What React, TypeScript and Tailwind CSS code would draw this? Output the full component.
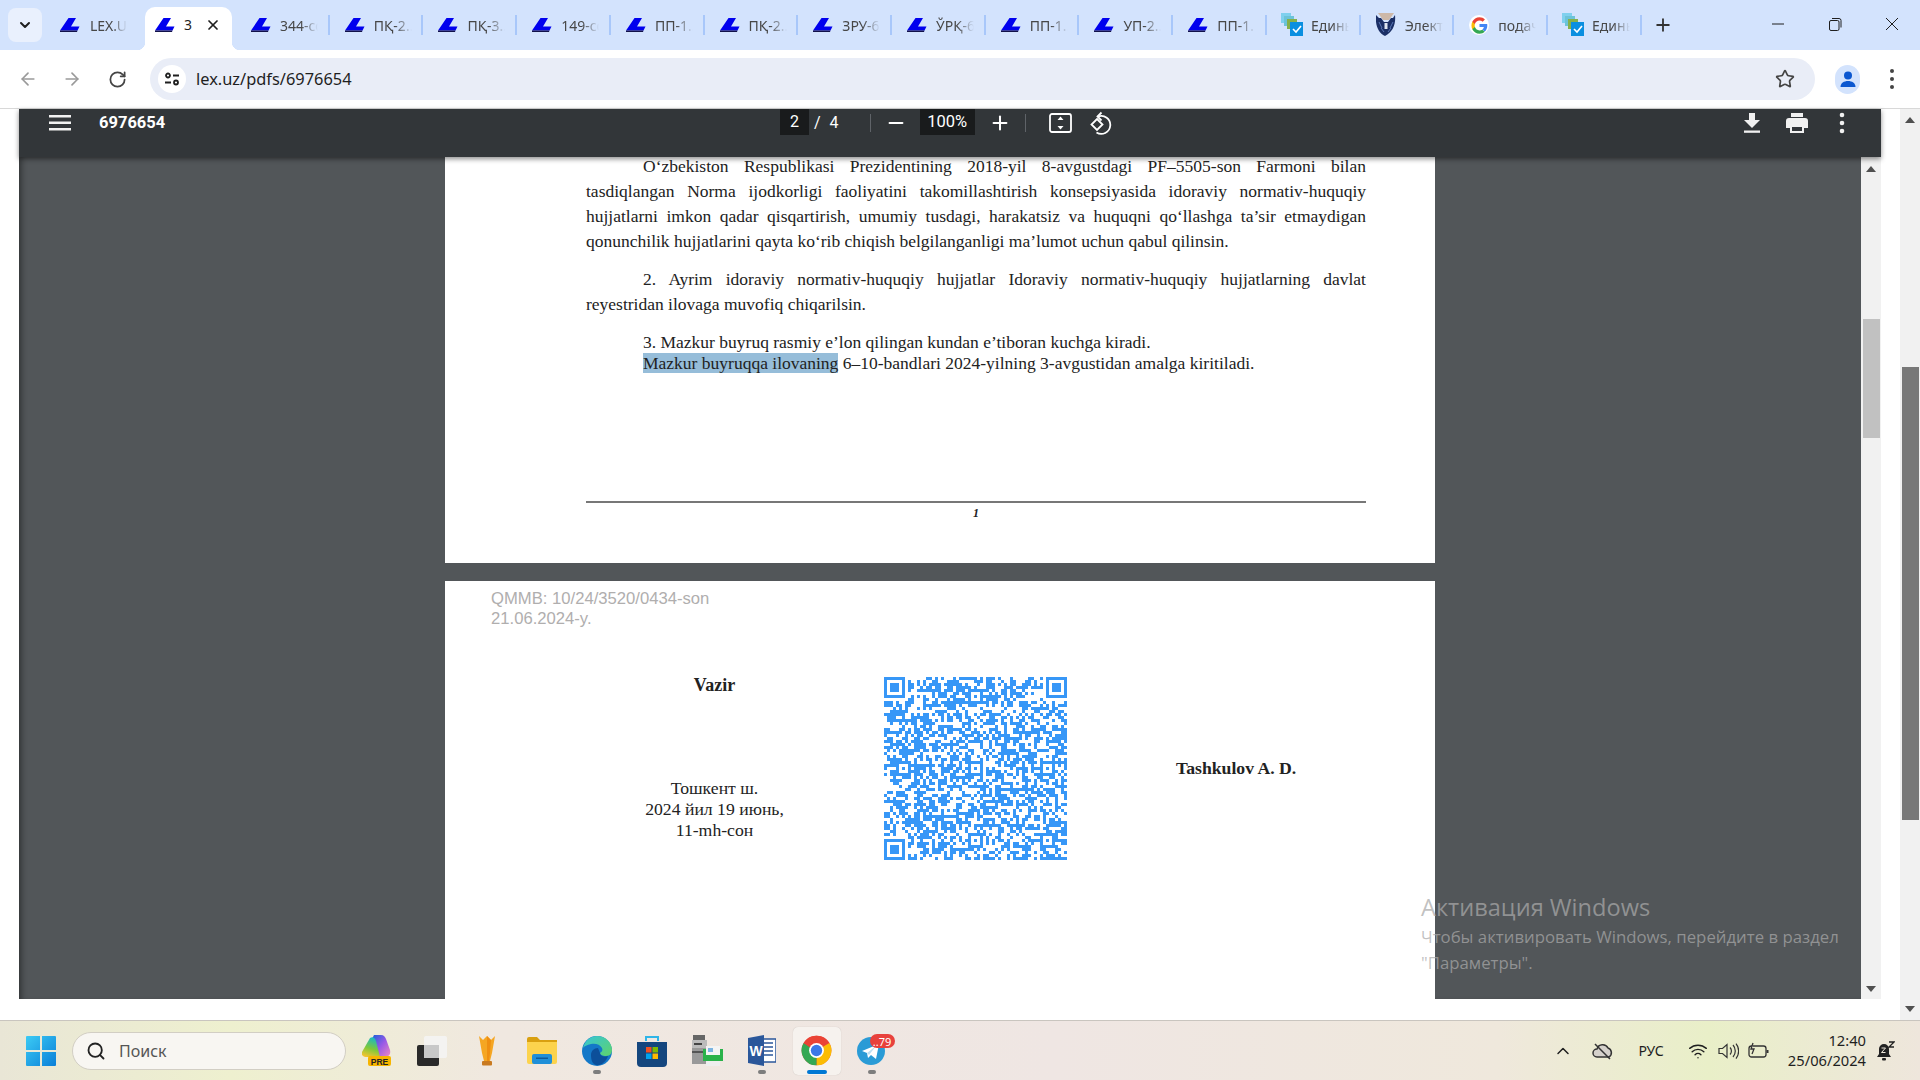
import { useMemo } from "react";
import { ArrowLeft, ArrowRight, ChevronDown, ChevronUp, Minus, Plus, RotateCw, Search, Star, Wifi, X } from "lucide-react";

function Lex() {
  return (
    <svg width="20" height="14" viewBox="0 0 20 14" className="shrink-0">
      <path d="M8.500 0H16l-5 8.500h8.500l-2 4H0z" fill="#0000ee" />
      <path d="M0 12.500h17.500L17 14H0z" fill="#12124a" />
    </svg>
  );
}
function Edin() {
  return (
    <svg width="22" height="24" viewBox="0 0 22 24" className="shrink-0">
      <rect x="0" y="0" width="10" height="10" fill="#7fd0ee" />
      <rect x="3" y="3" width="10" height="10" fill="#6cc3d8" />
      <rect x="6" y="6" width="10" height="10" fill="#86b04a" />
      <rect x="9" y="9" width="13" height="14" fill="#0a8fe0" />
      <path d="M12 16l3 3 5-6" stroke="#fff" strokeWidth="1.600" fill="none" />
    </svg>
  );
}
function Shield() {
  return (
    <svg width="20" height="24" viewBox="0 0 20 24" className="shrink-0">
      <path d="M2 0h16l-5 7H7z" fill="#cdb8a8" />
      <path d="M0 2l3 3 2 0 3 4h4l3-4 2 0 2-3c1 9-2 17-10 21C2 20-1 11 0 2z" fill="#1b2f66" />
      <path d="M3 9l3 6M17 9l-3 6M5 15l3 4M15 15l-3 4" stroke="#5a78b8" strokeWidth="1" />
      <path d="M8.500 10h3v6h-3z" fill="#dfe6f2" />
    </svg>
  );
}
function GoogleG({ size = 20 }: { size?: number }) {
  return (
    <span className="flex shrink-0 items-center justify-center rounded-full bg-white" style={{ width: size, height: size }}>
      <svg width={size - 3} height={size - 3} viewBox="0 0 48 48">
        <path fill="#4285F4" d="M46 24.500c0-1.600-.1-3.100-.4-4.500H24v8.500h12.400c-.5 2.900-2.100 5.300-4.600 7l7.100 5.500c4.200-3.800 7.100-9.500 7.100-16.500z" />
        <path fill="#34A853" d="M24 47c6.200 0 11.400-2 15-5.600l-7.200-5.500c-2 1.300-4.600 2.100-7.800 2.100-6 0-11.100-4-12.900-9.500H3.700v5.800C7.400 41.500 15.100 47 24 47z" />
        <path fill="#FBBC05" d="M11.100 28.500c-.5-1.400-.7-2.900-.7-4.500s.3-3.100.7-4.500v-5.800H3.700C2.200 16.700 1.300 20.200 1.300 24s.9 7.300 2.400 10.300z" />
        <path fill="#EA4335" d="M24 10c3.400 0 6.500 1.200 8.900 3.500l6.400-6.400C35.400 3.500 30.200 1 24 1 15.100 1 7.400 6.500 3.700 13.700l7.400 5.800C12.900 14 18 10 24 10z" />
      </svg>
    </span>
  );
}

const tabs: [string, string][] = [
  ["lex", "344-сон"], ["lex", "ПҚ-2..."], ["lex", "ПҚ-3..."], ["lex", "149-сон"], ["lex", "ПП-1..."],
  ["lex", "ПҚ-2..."], ["lex", "ЗРУ-6"], ["lex", "ЎРҚ-6"], ["lex", "ПП-1..."], ["lex", "УП-2..."],
  ["lex", "ПП-1..."], ["edin", "Единый"], ["shield", "Электрон"], ["g", "подача"], ["edin", "Единый"],
];

function Fav({ t }: { t: string }) {
  if (t === "lex") return <span className="flex w-5 shrink-0 justify-center"><Lex /></span>;
  if (t === "edin") return <span className="flex w-5 shrink-0 justify-center"><Edin /></span>;
  if (t === "shield") return <span className="flex w-5 shrink-0 justify-center"><Shield /></span>;
  return <span className="flex w-5 shrink-0 justify-center"><GoogleG /></span>;
}

function TabStrip() {
  return (
    <div className="flex h-[50px] shrink-0 items-start bg-[#d3e3fd] pl-2 font-['Noto_Sans',sans-serif] text-[14px] text-[#474747]">
      <div className="mt-2 flex h-[34px] w-[34px] items-center justify-center rounded-lg bg-[#e9f0fd]">
        <ChevronDown size={16} strokeWidth={3} className="text-[#1f1f1f]" />
      </div>
      <div className="mt-[15px] flex h-5 w-[103px] items-center pl-[18px]">
        <Fav t="lex" />
        <span className="ml-[10px] w-[37px] overflow-hidden whitespace-nowrap [mask-image:linear-gradient(90deg,#000_60%,transparent)]">LEX.UZ</span>
      </div>
      <div className="relative mt-[7px] flex h-[43px] w-[87px] items-center rounded-t-[10px] bg-white pb-[8px] pl-[10px]">
        <span className="absolute -left-2 bottom-0 h-2 w-2 bg-[radial-gradient(circle_at_0_0,transparent_8px,#fff_8.5px)]" />
        <span className="absolute -right-2 bottom-0 h-2 w-2 bg-[radial-gradient(circle_at_100%_0,transparent_8px,#fff_8.5px)]" />
        <Fav t="lex" />
        <span className="ml-[9px] w-[19px] overflow-hidden whitespace-nowrap text-[#1f1f1f]">3</span>
        <X size={16} strokeWidth={2.600} className="ml-[2px] text-[#1f1f1f]" />
      </div>
      <div className="ml-1 flex">
        {tabs.map(([t, s], i) => (
          <div key={i} className="mt-[15px] flex h-5 w-[93.73px] items-center border-r-2 border-[#a8c7fa] pl-[15px]">
            <Fav t={t} />
            <span className="ml-[9px] w-[38px] overflow-hidden whitespace-nowrap [mask-image:linear-gradient(90deg,#000_55%,transparent)]">{s}</span>
          </div>
        ))}
      </div>
      <Plus size={20} strokeWidth={2.200} className="ml-[11px] mt-[15px] text-[#333]" />
      <div className="ml-auto flex h-[48px] items-center text-[#1f1f1f]">
        <div className="flex w-[57px] justify-center">
          <svg width="16" height="16" viewBox="0 0 16 16"><path d="M2 8h12" stroke="#1f1f1f" strokeWidth="1" /></svg>
        </div>
        <div className="flex w-[57px] justify-center">
          <svg width="16" height="16" viewBox="0 0 16 16" fill="none" stroke="#1f1f1f" strokeWidth="1"><rect x="2.500" y="4.500" width="9.500" height="10" rx="1.500" /><path d="M5 2.500h7a2 2 0 0 1 2 2v7" /></svg>
        </div>
        <div className="flex w-[57px] justify-center">
          <svg width="16" height="16" viewBox="0 0 16 16"><path d="M2 2l12 12M14 2 2 14" stroke="#1f1f1f" strokeWidth="1" /></svg>
        </div>
      </div>
    </div>
  );
}

function Toolbar() {
  return (
    <div className="flex h-[59px] shrink-0 items-center rounded-t-[10px] border-b border-[#d8d8d8] bg-white font-['Noto_Sans',sans-serif]">
      <div className="flex w-[150px] shrink-0 items-center">
        <ArrowLeft size={20} strokeWidth={2} className="ml-[18px] text-[#9a9a9a]" />
        <ArrowRight size={20} strokeWidth={2} className="ml-[24px] text-[#9a9a9a]" />
        <RotateCw size={19} strokeWidth={2.200} className="ml-[26px] text-[#444]" />
      </div>
      <div className="flex h-[42px] w-[1665px] items-center rounded-full bg-[#e9edf7] pl-2">
        <span className="flex h-7 w-7 items-center justify-center rounded-full bg-white">
          <svg width="16" height="16" viewBox="0 0 16 16" fill="none" stroke="#1f1f1f" strokeWidth="1.800">
            <circle cx="4" cy="4.500" r="2" /><path d="M9 4.500h6M1 11.500h6" /><circle cx="12" cy="11.500" r="2" />
          </svg>
        </span>
        <span className="ml-[10px] text-[16.4px] text-[#1f1f1f]">lex.uz/pdfs/6976654</span>
        <Star size={20} strokeWidth={2} className="ml-auto mr-[20px] text-[#444]" />
      </div>
      <div className="ml-[20px] flex h-[29px] w-[25px] items-center justify-center rounded-full bg-[#d3e3fd]">
        <svg width="18" height="18" viewBox="0 0 18 18" fill="#0b57d0"><circle cx="9" cy="5.500" r="4" /><path d="M1.500 17c0-4 3.500-6 7.500-6s7.500 2 7.500 6z" /></svg>
      </div>
      <svg width="6" height="22" viewBox="0 0 6 22" fill="#444" className="ml-[29px]"><circle cx="3" cy="3" r="2" /><circle cx="3" cy="11" r="2" /><circle cx="3" cy="19" r="2" /></svg>
    </div>
  );
}

function PdfBar() {
  return (
    <div className="relative z-10 flex h-[48px] shrink-0 items-start bg-[#323639] font-['Roboto',sans-serif] text-white shadow-[0_2px_5px_rgba(0,0,0,.45)]">
      <div className="flex h-[28px] w-full items-center">
        <svg width="22" height="16" viewBox="0 0 22 16" fill="#f1f1f1" className="ml-[30px]"><rect width="22" height="2.500" /><rect y="6.500" width="22" height="2.500" /><rect y="13" width="22" height="2.500" /></svg>
        <span className="ml-[28px] w-[681px] text-[16.5px] font-bold">6976654</span>
        <span className="flex h-[26px] w-[29px] items-center justify-center self-start bg-[#191b1c] text-[16px]">2</span>
        <span className="ml-[5px] text-[16px]">/</span>
        <span className="ml-[9px] text-[16px]">4</span>
        <span className="ml-[31px] h-[18px] w-px bg-[#5f6368]" />
        <Minus size={22} strokeWidth={2.200} className="ml-[14px]" />
        <span className="ml-[13px] flex h-[26px] w-[55px] items-center justify-center self-start bg-[#191b1c] text-[16.5px]">100%</span>
        <Plus size={22} strokeWidth={2.200} className="ml-[14px]" />
        <span className="ml-[14px] h-[18px] w-px bg-[#5f6368]" />
        <svg width="23" height="20" viewBox="0 0 23 20" fill="none" className="ml-[23px]"><rect x="1" y="1" width="21" height="18" rx="2" stroke="#fff" strokeWidth="1.800" /><path d="M11.500 3.500l3 3.500h-6zM11.500 16.500l3-3.500h-6z" fill="#fff" /></svg>
        <svg width="24" height="24" viewBox="0 0 24 24" fill="none" stroke="#fff" strokeWidth="1.800" className="ml-[17px]">
          <path d="M9 5.500a9 9 0 1 1-1.500 16" /><path d="M12.500 1.500 8.500 5.500l4 4" /><path d="M8 8l5.500 5.500L8 19 2.500 13.500z" />
        </svg>
        <svg width="18" height="22" viewBox="0 0 18 22" fill="#f1f1f1" className="ml-[630px]"><path d="M6 1h6v7h5L9 16 1 8h5z" /><rect x="1" y="18.500" width="16" height="2.300" /></svg>
        <svg width="22" height="22" viewBox="0 0 22 22" fill="#f1f1f1" className="ml-[25px]"><path d="M5 1h12v4H5z" /><path clipRule="evenodd" fillRule="evenodd" d="M3 6h16a3 3 0 0 1 3 3v7h-4v5H4v-5H0V9a3 3 0 0 1 3-3zm3 9v4h10v-4z" /></svg>
        <svg width="6" height="22" viewBox="0 0 6 22" fill="#f1f1f1" className="ml-[31px]"><circle cx="3" cy="3" r="2.300" /><circle cx="3" cy="11" r="2.300" /><circle cx="3" cy="19" r="2.300" /></svg>
      </div>
    </div>
  );
}

function QR() {
  const d = useMemo(() => {
    const N = 61;
    let s = 20240619;
    const rnd = () => { s = (s * 1664525 + 1013904223) >>> 0; return (s >>> 16) / 65536; };
    const g: number[][] = [];
    for (let y = 0; y < N; y++) { g.push([]); for (let x = 0; x < N; x++) g[y].push(rnd() < 0.54 ? 1 : 0); }
    const finder = (ox: number, oy: number) => {
      for (let y = -1; y < 8; y++) for (let x = -1; x < 8; x++) {
        const X = ox + x, Y = oy + y;
        if (X < 0 || Y < 0 || X >= N || Y >= N) continue;
        const on = x >= 0 && x < 7 && y >= 0 && y < 7 && (x === 0 || x === 6 || y === 0 || y === 6 || (x >= 2 && x <= 4 && y >= 2 && y <= 4));
        g[Y][X] = on ? 1 : 0;
      }
    };
    finder(0, 0); finder(54, 0); finder(0, 54);
    const al = [6, 30, 54];
    for (const ay of al) for (const ax of al) {
      if ((ax === 6 && ay === 6) || (ax === 54 && ay === 6) || (ax === 6 && ay === 54)) continue;
      for (let y = -2; y <= 2; y++) for (let x = -2; x <= 2; x++)
        g[ay + y][ax + x] = Math.max(Math.abs(x), Math.abs(y)) === 1 ? 0 : 1;
    }
    let p = "";
    for (let y = 0; y < N; y++) for (let x = 0; x < N; x++) if (g[y][x]) p += `M${x} ${y}h1v1h-1z`;
    return p;
  }, []);
  return (
    <svg width="183" height="183" viewBox="0 0 61 61" shapeRendering="crispEdges" className="shrink-0">
      <path d={d} fill="#3797f7" />
    </svg>
  );
}

function J({ children, indent }: { children: string; indent?: boolean }) {
  return <div className={`[text-align:justify] [text-align-last:justify] ${indent ? "indent-[57px]" : ""}`}>{children}</div>;
}

function Pages() {
  return (
    <div className="flex min-w-0 flex-1 flex-col items-center overflow-hidden bg-[#525659] shadow-[inset_6px_0_6px_-4px_rgba(0,0,0,.45)]">
      <div className="flex h-[406px] w-[990px] shrink-0 flex-col bg-white pl-[141px] pr-[69px] font-['Liberation_Serif',serif] text-[17.5px] text-[#222]">
        <div className="-mt-[3px] leading-[25px]">
          <J indent>O‘zbekiston Respublikasi Prezidentining 2018-yil 8-avgustdagi PF–5505-son Farmoni bilan</J>
          <J>tasdiqlangan Norma ijodkorligi faoliyatini takomillashtirish konsepsiyasida idoraviy normativ-huquqiy</J>
          <J>hujjatlarni imkon qadar qisqartirish, umumiy tusdagi, harakatsiz va huquqni qo‘llashga ta’sir etmaydigan</J>
          <div>qonunchilik hujjatlarini qayta ko‘rib chiqish belgilanganligi ma’lumot uchun qabul qilinsin.</div>
        </div>
        <div className="mt-[13px] leading-[25px]">
          <J indent>2. Ayrim idoraviy normativ-huquqiy hujjatlar Idoraviy normativ-huquqiy hujjatlarning davlat</J>
          <div>reyestridan ilovaga muvofiq chiqarilsin.</div>
        </div>
        <div className="mt-[15px] pl-[57px] leading-[20.5px]">
          <div>3. Mazkur buyruq rasmiy e’lon qilingan kundan e’tiboran kuchga kiradi.</div>
          <div><span className="bg-[#96bdd9]">Mazkur buyruqqa ilovaning</span> 6–10-bandlari 2024-yilning 3-avgustidan amalga kiritiladi.</div>
        </div>
        <div className="mt-[128px] h-[2px] bg-[#777]" />
        <div className="mt-[3px] text-center text-[12px] font-bold italic leading-[14px]">1</div>
      </div>
      <div className="mt-[18px] flex h-[420px] w-[990px] shrink-0 flex-col bg-white font-['Liberation_Serif',serif] text-[#222]">
        <div className="pl-[46px] pt-[8px] font-['Liberation_Sans',sans-serif] text-[16.65px] leading-[20px] text-[#b0aeae]">
          <div>QMMB: 10/24/3520/0434-son</div>
          <div>21.06.2024-y.</div>
        </div>
        <div className="mt-[48px] flex">
          <div className="flex h-[183px] w-[439px] shrink-0 flex-col items-center pl-[100px] text-[17.7px]">
            <div className="mt-[-5.5px] text-[18px] font-bold">Vazir</div>
            <div className="mt-[79.5px] text-center leading-[21px]">
              <div>Тошкент ш.</div>
              <div>2024 йил 19 июнь,</div>
              <div>11-mh-сон</div>
            </div>
          </div>
          <QR />
          <div className="ml-[109px] mt-[77.5px] text-[17.7px] font-bold">Tashkulov A. D.</div>
        </div>
      </div>
    </div>
  );
}

function Arrow({ up, className = "" }: { up?: boolean; className?: string }) {
  return (
    <svg width="10" height="6" viewBox="0 0 10 6" fill="#505050" className={className}>
      <path d={up ? "M5 0l5 6H0z" : "M0 0h10L5 6z"} />
    </svg>
  );
}

function InnerScroll() {
  return (
    <div className="flex w-5 shrink-0 flex-col items-center bg-[#f1f1f1]">
      <Arrow up className="mt-[9px]" />
      <div className="mt-[147px] h-[119px] w-[17px] bg-[#c1c1c1]" />
      <Arrow className="mt-auto mb-[7px]" />
    </div>
  );
}

function OuterScroll() {
  return (
    <div className="flex w-5 shrink-0 flex-col items-center bg-[#f1f1f1]">
      <Arrow up className="mt-[8px]" />
      <div className="mt-[244px] h-[453px] w-[17px] bg-[#787878]" />
      <Arrow className="mt-auto mb-[8px]" />
    </div>
  );
}

function Main() {
  return (
    <div className="relative flex min-h-0 flex-1 bg-white">
      <div className="ml-[19px] flex h-[890px] w-[1862px] shrink-0 flex-col">
        <PdfBar />
        <div className="flex min-h-0 flex-1">
          <Pages />
          <InnerScroll />
        </div>
      </div>
      <div className="ml-[19px] flex">
        <OuterScroll />
      </div>
      <div className="pointer-events-none absolute left-[1421px] top-[780px] z-20 font-['Open_Sans',sans-serif] text-[rgba(170,170,170,.72)]">
        <div className="text-[23.6px] leading-[36px]">Активация Windows</div>
        <div className="-mt-px text-[16.8px] leading-[26px]">Чтобы активировать Windows, перейдите в раздел</div>
        <div className="text-[16.8px] leading-[26px]">"Параметры".</div>
      </div>
    </div>
  );
}

function Copilot() {
  return (
    <svg width="30" height="31" viewBox="0 0 30 31">
      <defs>
        <linearGradient id="cp" x1="0" y1="0" x2="1" y2="1"><stop offset="0" stopColor="#1a5fd8" /><stop offset=".5" stopColor="#9a5ae6" /><stop offset="1" stopColor="#f08ac0" /></linearGradient>
        <linearGradient id="cp2" x1="0.600" y1="0" x2="0.300" y2="1"><stop offset="0" stopColor="#17b8c8" /><stop offset=".55" stopColor="#7cc83a" /><stop offset="1" stopColor="#f4c430" /></linearGradient>
      </defs>
      <path d="M12 0h7c3 0 4 2 5 4l4 11c1 4-1 7-5 7h-6l-3-11c-1-4-2-7-4-7z" fill="url(#cp)" />
      <path d="M8 3c3-2 5 0 6 3l4 16H5c-4 0-6-2-5-5z" fill="url(#cp2)" />
      <rect x="6" y="21" width="23" height="10" rx="2" fill="#f7b500" />
      <text x="17.500" y="29.500" textAnchor="middle" fontSize="8.500" fontWeight="700" fontFamily="Liberation Sans" fill="#222">PRE</text>
    </svg>
  );
}
function TaskView() {
  return (
    <svg width="30" height="30" viewBox="0 0 30 30">
      <rect x="0" y="9" width="22" height="21" rx="2" fill="#2a2a2a" />
      <rect x="7" y="0" width="23" height="22" rx="2" fill="#f4f4f4" opacity=".85" />
      <rect x="7" y="9" width="15" height="13" fill="#c8c8c8" />
    </svg>
  );
}
function Trophy() {
  return (
    <svg width="16" height="30" viewBox="0 0 16 30">
      <path d="M0 0l4 4 4-4 4 4 4-4-3 17-2 8H5l-2-8z" fill="#f5a623" />
      <path d="M8 0l4 4-1 13-1 8H8z" fill="#ef8f12" />
      <rect x="3" y="25" width="10" height="4.500" rx="1" fill="#c97a20" />
    </svg>
  );
}
function Folder() {
  return (
    <svg width="30" height="27" viewBox="0 0 30 27">
      <path d="M0 2a2 2 0 0 1 2-2h8l3 3h17v4H0z" fill="#d9a010" />
      <path d="M0 5h30v20a2 2 0 0 1-2 2H2a2 2 0 0 1-2-2z" fill="#fcd34d" />
      <rect x="5" y="17" width="20" height="10" rx="2" fill="#1f8fd8" />
      <rect x="9" y="20.500" width="12" height="1.500" fill="#0c5a9a" />
    </svg>
  );
}
function Edge() {
  return (
    <svg width="30" height="32" viewBox="0 0 30 32">
      <defs>
        <linearGradient id="eg" x1="0" y1="0" x2="1" y2="1"><stop offset="0" stopColor="#36c5d8" /><stop offset="1" stopColor="#5fd36a" /></linearGradient>
      </defs>
      <circle cx="15" cy="16" r="15" fill="#1478c8" />
      <path d="M1 13C3 5 9 1 15 1c8 0 15 6 15 14 0 3-2 6-6 6-3 0-6-1-6-3 2-1 3-3 2-5-2-4-7-5-11-4-4 1-7 2-8 4z" fill="url(#eg)" />
      <path d="M9 20c0-4 3-7 7-7l2 5c0 3 4 4 8 3-2 6-7 10-12 9-4-1-5-6-5-10z" fill="#0c4f9a" />
    </svg>
  );
}
function Store() {
  return (
    <svg width="30" height="32" viewBox="0 0 30 32">
      <path d="M9 6V2h12v4" fill="none" stroke="#2fb5e8" strokeWidth="2" />
      <path d="M0 7h30v21a4 4 0 0 1-4 4H4a4 4 0 0 1-4-4z" fill="#14467e" />
      <rect x="9" y="12" width="5.500" height="5.500" fill="#f25022" />
      <rect x="15.500" y="12" width="5.500" height="5.500" fill="#7fba00" />
      <rect x="9" y="18.500" width="5.500" height="5.500" fill="#00a4ef" />
      <rect x="15.500" y="18.500" width="5.500" height="5.500" fill="#ffb900" />
    </svg>
  );
}
function Printer() {
  return (
    <svg width="32" height="32" viewBox="0 0 32 32">
      <rect x="2" y="0" width="12" height="5" fill="#666" />
      <rect x="1" y="5" width="15" height="8" fill="#bbb" />
      <rect x="3" y="8" width="8" height="2" fill="#444" />
      <rect x="1" y="13" width="14" height="16" fill="#999" />
      <rect x="1" y="16" width="14" height="2" fill="#555" />
      <rect x="12" y="14" width="20" height="12" fill="#2ab24a" />
      <rect x="15" y="11" width="14" height="9" fill="#f4f4f4" />
      <rect x="17" y="13" width="5" height="4" fill="#7cb4e0" />
      <rect x="15" y="26" width="14" height="5" fill="#eee" />
    </svg>
  );
}
function Word() {
  return (
    <svg width="28" height="31" viewBox="0 0 28 31">
      <rect x="11" y="4" width="17" height="23" fill="#fff" stroke="#2b579a" strokeWidth="1.500" />
      <path d="M14 8h11M14 12h11M14 16h11M14 20h11" stroke="#2b579a" strokeWidth="1.500" />
      <path d="M0 3l16-3v31L0 28z" fill="#2b579a" />
      <text x="8" y="21" textAnchor="middle" fontSize="14" fontWeight="700" fontFamily="Liberation Sans" fill="#fff">W</text>
    </svg>
  );
}
function Chrome() {
  return (
    <svg width="31" height="31" viewBox="0 0 48 48">
      <circle cx="24" cy="24" r="23" fill="#ea4335" />
      <path d="M24 24 44 12.500A23 23 0 0 1 24 47z" fill="#fbbc04" />
      <path d="M24 24 24 47A23 23 0 0 1 4 12.500z" fill="#34a853" />
      <path d="M24 1a23 23 0 0 1 20 11.500H24A11.500 11.500 0 0 0 13.500 19L4 12.500A23 23 0 0 1 24 1z" fill="#ea4335" />
      <circle cx="24" cy="24" r="11.500" fill="#fff" />
      <circle cx="24" cy="24" r="8.800" fill="#3b78e7" />
    </svg>
  );
}
function Telegram() {
  return (
    <span className="relative block h-[31px] w-[30px]">
      <svg width="28" height="28" viewBox="0 0 28 28" className="mt-[2px]">
        <circle cx="14" cy="14" r="14" fill="#2a9bd6" />
        <path d="M5 14l17-7-3 15-5-4-3 3-1-5z" fill="#fff" />
        <path d="M10 16l9-7-7 9z" fill="#bcdff2" />
      </svg>
      <span className="absolute -right-[8px] -top-[1px] flex h-[14px] w-[25px] items-center justify-center rounded-[7px] bg-[#e8413c] font-['Noto_Sans',sans-serif] text-[11px] leading-none text-white">..79</span>
    </span>
  );
}
function StartLogo() {
  return (
    <svg width="30" height="30" viewBox="0 0 30 30">
      <defs>
        <linearGradient id="win" x1="0" y1="0" x2="1" y2="1"><stop offset="0" stopColor="#3ccbf4" /><stop offset="1" stopColor="#0a7fd8" /></linearGradient>
      </defs>
      <path d="M1 0h13v14H0V1a1 1 0 0 1 1-1zM16 0h13a1 1 0 0 1 1 1v13H16zM0 16h14v14H1a1 1 0 0 1-1-1zM16 16h14v13a1 1 0 0 1-1 1H16z" fill="url(#win)" />
    </svg>
  );
}

function Cell({ children, active, dot }: { children: React.ReactNode; active?: boolean; dot?: boolean }) {
  return (
    <div className={`relative flex h-[48px] w-[48px] items-center justify-center rounded-[5px] mx-[3.5px] ${active ? "bg-[#f6f2ee] shadow-[0_0_1px_rgba(0,0,0,.2)]" : ""}`}>
      {children}
      {dot && <span className="absolute bottom-[1px] left-1/2 h-1 w-2 -translate-x-1/2 rounded-full bg-[#7d7d7d]" />}
      {active && <span className="absolute bottom-[1px] left-1/2 h-1 w-5 -translate-x-1/2 rounded-full bg-[#0078d4]" />}
    </div>
  );
}

function Taskbar() {
  return (
    <div className="flex h-[60px] shrink-0 items-center border-t border-[#c9c5bf] bg-[linear-gradient(90deg,#e9e6d6_0%,#eef0cf_12%,#f0e8e0_26%,#efe6e3_55%,#efe8dc_78%,#e9efc8_89%,#eee6dc_100%)] font-['Noto_Sans',sans-serif] text-[#1f1f1f]">
      <div className="ml-[26px] flex w-[30px] shrink-0"><StartLogo /></div>
      <div className="ml-[16px] flex h-[38px] w-[274px] shrink-0 items-center rounded-full border border-[#d2cec4] bg-[#f8f6f2] pl-[13px]">
        <Search size={20} strokeWidth={2.200} className="text-[#222]" />
        <span className="ml-[13px] text-[16px] text-[#555]">Поиск</span>
      </div>
      <div className="ml-[3px] flex items-center">
        <Cell><Copilot /></Cell>
        <Cell><TaskView /></Cell>
        <Cell><Trophy /></Cell>
        <Cell><Folder /></Cell>
        <Cell dot><Edge /></Cell>
        <Cell><Store /></Cell>
        <Cell><Printer /></Cell>
        <Cell dot><Word /></Cell>
        <Cell active><Chrome /></Cell>
        <Cell dot><Telegram /></Cell>
      </div>
      <div className="ml-auto flex items-center text-[14px]">
        <div className="flex w-10 justify-center"><ChevronUp size={20} strokeWidth={1.800} /></div>
        <div className="flex w-10 justify-center">
          <svg width="22" height="18" viewBox="0 0 22 18" fill="#d5d1cb" stroke="#333" strokeWidth="1.500"><path d="M5 15a4 4 0 0 1 0-8 6 6 0 0 1 11-1 5 5 0 0 1 1 9z" /><path d="M3 2l15 15" /></svg>
        </div>
        <div className="flex w-[56px] justify-center text-[14px]">РУС</div>
        <div className="flex w-[38px] justify-center"><Wifi size={20} strokeWidth={1.700} /></div>
        <div className="flex w-[22px] justify-center">
          <svg width="21" height="18" viewBox="0 0 21 18" fill="none" stroke="#333" strokeWidth="1.200"><path d="M1 6.500h3.500L9 2.500v13l-4.500-4H1z" /><path d="M12 5.500a5 5 0 0 1 0 7M15 3a9 9 0 0 1 0 12M18 1.500a12 12 0 0 1 0 15" /></svg>
        </div>
        <div className="flex w-[38px] justify-center">
          <svg width="21" height="18" viewBox="0 0 21 18" fill="none" stroke="#333" strokeWidth="1.300"><rect x="1" y="4" width="17" height="11" rx="2.500" /><path d="M19.500 8v3" strokeWidth="2" /><path d="M5 1 3 7h3l-2 5" fill="#efe9dc" /></svg>
        </div>
        <div className="-mt-px w-[89px] text-right text-[14.7px] leading-[20px]">
          <div>12:40</div>
          <div>25/06/2024</div>
        </div>
        <div className="flex w-[40px] justify-center">
          <svg width="18" height="20" viewBox="0 0 18 20" fill="#222"><path d="M7 3a5 5 0 0 0-5 5v5l-2 3h14l-2-3V8a5 5 0 0 0-5-5z" /><rect x="5" y="17" width="4" height="2.500" rx="1" /><path d="M4.500 7h4l-4 4.500h4" stroke="#efe9dc" strokeWidth="1" fill="none" /><path d="M12 1h5l-5 5h5" stroke="#222" strokeWidth="1.300" fill="none" /></svg>
        </div>
        <div className="w-[14px]" />
      </div>
    </div>
  );
}

export default function App() {
  return (
    <div className="flex h-[1080px] w-[1920px] flex-col overflow-hidden bg-white">
      <TabStrip />
      <Toolbar />
      <Main />
      <Taskbar />
    </div>
  );
}
